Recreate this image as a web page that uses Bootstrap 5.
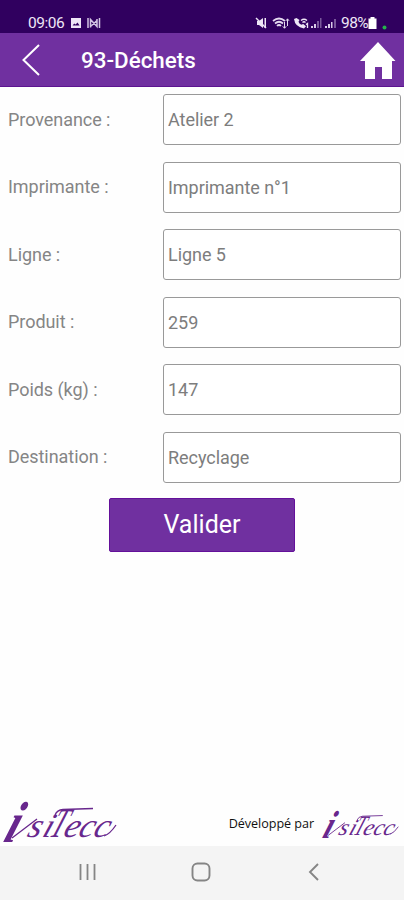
<!DOCTYPE html>
<html lang="fr">
<head>
<meta charset="utf-8">
<meta name="viewport" content="width=device-width, initial-scale=1">
<title>93-Déchets</title>
<link href="https://cdn.jsdelivr.net/npm/bootstrap@5.3.0/dist/css/bootstrap.min.css" rel="stylesheet">
<style>
body { font-family: Roboto, sans-serif; height: 900px; overflow: hidden; background: #fefefe; color: #858585; }
svg { display: block; flex: none; overflow: visible; }
.status { height: 33px; background: #30005f; color: #eee6f6; padding: 12px 17px 0 28px; font-size: 15.5px; line-height: 22px; }
.clock { width: 42px; letter-spacing: -.45px; }
.pct { letter-spacing: -.6px; margin-left: 2px; }
.appbar { height: 54px; background: #7030a0; border-bottom: 1px solid #5c1590; padding: 0 7px 0 20px; }
.title { font-size: 22.4px; font-weight: 500; line-height: 30px; margin-left: 39px; padding-top: 1px; }
.fields { padding: 7px 3px 0 8px; row-gap: 16.5px; }
.fields label { width: 155px; flex: none; font-size: 18px; letter-spacing: -.05px; padding-bottom: 1px; }
.fields .form-control { height: 51px; border: 1px solid #999; border-radius: 3px; padding: 0 4px; font-size: 18px; letter-spacing: -.05px; color: #7d7d7d; background: #fff; }
.validate { width: 186px; height: 54px; margin: 15px 0 0 109px; font-size: 25px; line-height: 50px; padding: 0; border-radius: 2px; --bs-btn-bg: #7030a0; --bs-btn-border-color: #64109a; --bs-btn-color: #fff; --bs-btn-hover-bg: #64109a; --bs-btn-hover-color: #fff; }
.brandline { height: 47px; }
.devby { font-family: "Open Sans", sans-serif; font-size: 12.6px; line-height: 18px; color: #111; margin-bottom: 13px; letter-spacing: -.05px; }
.minilogo { margin: 0 3px 5px 6px; }
.sysnav { height: 54px; background: #f4f4f4; padding: 0 85px 2px 79px; }
.homekey { margin-right: 3px; }
.script { font-family: "Liberation Serif", serif; font-style: italic; }
</style>
<script src="https://cdn.jsdelivr.net/npm/bootstrap@5.3.0/dist/js/bootstrap.bundle.min.js"></script>
</head>
<body class="d-flex flex-column">
<div class="status d-flex align-items-center">
  <span class="clock">09:06</span>
  <svg width="32" height="12" viewBox="0 0 32 12">
    <path fill="#eee6f6" fill-rule="evenodd" d="M1 1h10v10H1zM2.600 8.500h7L7.500 5.500 5.600 7.500 4.200 6.500z"/>
    <g fill="none" stroke="#d3c4e3" stroke-width="1.500"><path d="M18 1v10M29.500 1v10M20.500 10.500V2.500l6.500 7V2M20.500 9.500l6.500-6"/></g>
  </svg>
  <svg class="ms-auto" width="84" height="14" viewBox="0 0 84 14">
    <g fill="#eee6f6"><path d="M2 5h2l4-3v10L4 9H2z"/><path d="M9.500 2H11v10H9.500z"/></g>
    <path d="M1 2l10 10" stroke="#eee6f6" stroke-width="1.400"/>
    <g fill="none" stroke="#e5daf0" stroke-width="1.700"><path d="M18 5q6-5 12 0M20 7.500q4-3.500 8 0M22 10q2-2 4 0"/><path d="M29.500 12V6M27.800 10.300l1.700 2 1.700-2M32.500 3v7M31 4.800l1.500-2 1.500 2" stroke-width="1"/></g>
    <path d="M39 3q1 8 10 9.500l2-2.200-2.800-2.300-1.900.8q-2.300-1-2.800-3.100L44.500 4 41.500 2z" fill="#eee6f6"/>
    <path d="M46 4.500q3-2.500 6 0M47.500 6.500q1.500-1.500 3 0M51 8.500l1.500-1V12" fill="none" stroke="#eee6f6" stroke-width="1.300"/>
    <g fill="#d9cce8"><path d="M56 10h2v2h-2zM59 8h2v4h-2zM70 10h2v2h-2zM73 8h2v4h-2zM76 6h1.500v6H76z"/></g>
    <g fill="#79589b"><path d="M62 5h2v7h-2zM65 2h1.500v10H65zM79 3h2v9h-2z"/></g>
  </svg>
  <span class="pct">98%</span>
  <svg width="19" height="14" viewBox="0 0 19 14"><path d="M2.500 1h4v1.500H8.500V13h-8V2.500h2z" fill="#fff"/><circle cx="16.500" cy="11.500" r="2" fill="#25b34b"/></svg>
</div>
<header class="appbar d-flex align-items-center text-white">
  <svg width="22" height="34" viewBox="0 0 22 34"><path d="M19 2L3.500 17 19 32" fill="none" stroke="#fff" stroke-width="2"/></svg>
  <h1 class="title mb-0">93-Déchets</h1>
  <svg class="ms-auto" width="38" height="40" viewBox="0 0 38 40"><path fill="#fff" d="M19 2L36.500 21H33v18H23V27h-7v12H6V21H1z"/></svg>
</header>
<form class="fields d-flex flex-column">
  <div class="d-flex align-items-center"><label for="f1">Provenance :</label><input id="f1" class="form-control" value="Atelier 2"></div>
  <div class="d-flex align-items-center"><label for="f2">Imprimante :</label><input id="f2" class="form-control" value="Imprimante n°1"></div>
  <div class="d-flex align-items-center"><label for="f3">Ligne :</label><input id="f3" class="form-control" value="Ligne 5"></div>
  <div class="d-flex align-items-center"><label for="f4">Produit :</label><input id="f4" class="form-control" value="259"></div>
  <div class="d-flex align-items-center"><label for="f5">Poids (kg) :</label><input id="f5" class="form-control" value="147"></div>
  <div class="d-flex align-items-center"><label for="f6">Destination :</label><input id="f6" class="form-control" value="Recyclage"></div>
</form>
<button type="button" class="btn validate flex-shrink-0">Valider</button>
<footer class="mt-auto">
  <div class="brandline d-flex align-items-end">
    <svg width="120" height="47" viewBox="0 0 120 47">
      <g id="wordmark" class="script" fill="#68278d">
        <text transform="translate(2 43) skewX(-20)" font-size="58" font-weight="bold" textLength="13" lengthAdjust="spacingAndGlyphs">i</text>
        <text transform="translate(0 38) skewX(-20)" font-size="34" x="26 41">si</text>
        <text transform="translate(48 38) skewX(-22) scale(.6 1)" font-size="42">T</text>
        <text transform="translate(0 38) skewX(-20)" font-size="34" x="62 77 92">ecc</text>
        <path d="M12 39L37 20M55 16q2-5 8-5.500L93 9.500M104 37q6-2 12-11" fill="none" stroke="#68278d" stroke-width="1.300"/>
      </g>
    </svg>
    <span class="devby ms-auto">Développé par</span>
    <svg class="minilogo" width="81" height="32" viewBox="0 0 120 47"><use href="#wordmark"/></svg>
  </div>
  <nav class="sysnav d-flex align-items-center justify-content-between">
    <svg width="17" height="18" viewBox="0 0 17 18"><path d="M1.500 1v16M8.500 1v16M15.500 1v16" stroke="#858585" stroke-width="1.800"/></svg>
    <svg class="homekey" width="20" height="20" viewBox="0 0 20 20"><rect x="1.500" y="1.500" width="17" height="17" rx="5" fill="none" stroke="#858585" stroke-width="1.900"/></svg>
    <svg width="11" height="18" viewBox="0 0 11 18"><path d="M10 1L2 9l8 8" fill="none" stroke="#858585" stroke-width="1.900"/></svg>
  </nav>
</footer>
</body>
</html>
